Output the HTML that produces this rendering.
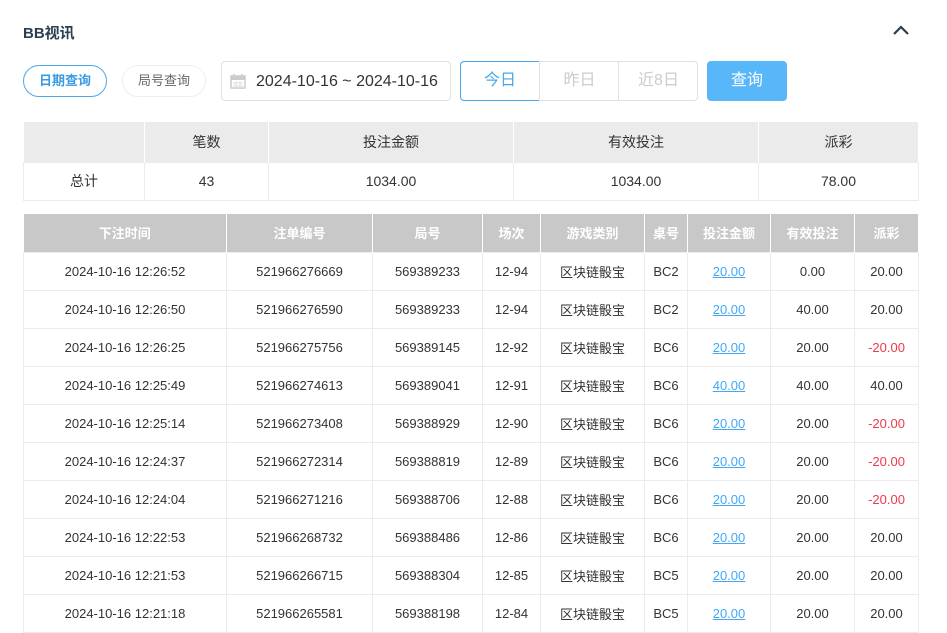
<!DOCTYPE html><html><head><meta charset="utf-8"><style>
*{box-sizing:border-box;margin:0;padding:0}
body{width:947px;height:624px;overflow:hidden;background:#fff;font-family:"Liberation Sans","Noto Sans CJK SC",sans-serif;color:#333;position:relative;font-size:14px}
.a{position:absolute}
.title{left:23px;top:22px;font-size:15px;font-weight:bold;color:#2c3e50}
.btn{border-radius:16px;text-align:center;font-size:13px;line-height:30px;height:32px}
table{border-collapse:collapse;position:absolute;left:23px;width:895px;table-layout:fixed}
td,th{text-align:center;font-weight:normal}
.s th{background:#ebebeb;height:40px;border-right:1px solid #fff;font-size:14px}
.s td{height:38px;border:1px solid #ebebeb;font-size:14px}
.d th{background:#c8c8c8;color:#fff;font-weight:bold;font-size:13px;height:38px;border-right:1px solid #fff}
.d td{height:38px;border:1px solid #ebebeb;font-size:13px}
.l{color:#3fa9f5;text-decoration:underline}
.r{color:#f0394b}
</style></head><body>
<div class="a title">BB视讯</div>
<svg class="a" style="left:892px;top:24px" width="18" height="12"><path d="M2 10 L9 3 L16 10" stroke="#2c3e50" stroke-width="2.2" fill="none"/></svg>
<div class="a btn" style="left:23px;top:65px;width:84px;border:1px solid #4aa8e8;color:#3a9be0;font-weight:bold">日期查询</div>
<div class="a btn" style="left:122px;top:65px;width:84px;border:1px solid #eee;color:#666">局号查询</div>
<div class="a" style="left:221px;top:61px;width:230px;height:40px;border:1px solid #e0e0e0;border-radius:4px"></div>
<svg class="a" style="left:230px;top:73px" width="16" height="16"><rect x="1" y="3" width="14" height="12" fill="none" stroke="#ccc" stroke-width="1.5"/><rect x="1" y="3" width="14" height="4" fill="#ccc"/><path d="M4 1v4M12 1v4" stroke="#ccc" stroke-width="1.5"/><path d="M3 10h10M3 13h10M6 8v7M10 8v7" stroke="#ddd"/></svg>
<div class="a" style="left:256px;top:73px;font-size:16px;color:#333">2024-10-16 ~ 2024-10-16</div>
<div class="a" style="left:460px;top:61px;width:238px;height:40px;border:1px solid #e0e0e0;border-radius:4px"></div>
<div class="a" style="left:460px;top:61px;width:80px;height:40px;border:1px solid #4aa8e8;border-radius:4px 0 0 4px;color:#4aa8e8;text-align:center;line-height:38px;font-size:16px">今日</div>
<div class="a" style="left:539px;top:61px;width:1px;height:40px;background:#e0e0e0"></div>
<div class="a" style="left:540px;top:61px;width:79px;line-height:40px;text-align:center;color:#ccc;font-size:16px">昨日</div>
<div class="a" style="left:618px;top:61px;width:1px;height:40px;background:#e0e0e0"></div>
<div class="a" style="left:619px;top:61px;width:79px;line-height:40px;text-align:center;color:#ccc;font-size:16px">近8日</div>
<div class="a" style="left:707px;top:61px;width:80px;height:40px;background:#58b7f9;border-radius:4px;color:#fff;text-align:center;line-height:40px;font-size:16px">查询</div>
<table class="s" style="top:122px"><colgroup><col width="121"><col width="124"><col width="245"><col width="245"><col width="160"></colgroup>
<tr><th></th><th>笔数</th><th>投注金额</th><th>有效投注</th><th>派彩</th></tr>
<tr><td>总计</td><td>43</td><td>1034.00</td><td>1034.00</td><td>78.00</td></tr></table>
<table class="d" style="top:214px"><colgroup><col width="203"><col width="146"><col width="110"><col width="58"><col width="104"><col width="43"><col width="83"><col width="84"><col width="64"></colgroup>
<tr><th>下注时间</th><th>注单编号</th><th>局号</th><th>场次</th><th>游戏类别</th><th>桌号</th><th>投注金额</th><th>有效投注</th><th>派彩</th></tr>
<tr><td>2024-10-16 12:26:52</td><td>521966276669</td><td>569389233</td><td>12-94</td><td>区块链骰宝</td><td>BC2</td><td class="l">20.00</td><td>0.00</td><td>20.00</td></tr>
<tr><td>2024-10-16 12:26:50</td><td>521966276590</td><td>569389233</td><td>12-94</td><td>区块链骰宝</td><td>BC2</td><td class="l">20.00</td><td>40.00</td><td>20.00</td></tr>
<tr><td>2024-10-16 12:26:25</td><td>521966275756</td><td>569389145</td><td>12-92</td><td>区块链骰宝</td><td>BC6</td><td class="l">20.00</td><td>20.00</td><td class="r">-20.00</td></tr>
<tr><td>2024-10-16 12:25:49</td><td>521966274613</td><td>569389041</td><td>12-91</td><td>区块链骰宝</td><td>BC6</td><td class="l">40.00</td><td>40.00</td><td>40.00</td></tr>
<tr><td>2024-10-16 12:25:14</td><td>521966273408</td><td>569388929</td><td>12-90</td><td>区块链骰宝</td><td>BC6</td><td class="l">20.00</td><td>20.00</td><td class="r">-20.00</td></tr>
<tr><td>2024-10-16 12:24:37</td><td>521966272314</td><td>569388819</td><td>12-89</td><td>区块链骰宝</td><td>BC6</td><td class="l">20.00</td><td>20.00</td><td class="r">-20.00</td></tr>
<tr><td>2024-10-16 12:24:04</td><td>521966271216</td><td>569388706</td><td>12-88</td><td>区块链骰宝</td><td>BC6</td><td class="l">20.00</td><td>20.00</td><td class="r">-20.00</td></tr>
<tr><td>2024-10-16 12:22:53</td><td>521966268732</td><td>569388486</td><td>12-86</td><td>区块链骰宝</td><td>BC6</td><td class="l">20.00</td><td>20.00</td><td>20.00</td></tr>
<tr><td>2024-10-16 12:21:53</td><td>521966266715</td><td>569388304</td><td>12-85</td><td>区块链骰宝</td><td>BC5</td><td class="l">20.00</td><td>20.00</td><td>20.00</td></tr>
<tr><td>2024-10-16 12:21:18</td><td>521966265581</td><td>569388198</td><td>12-84</td><td>区块链骰宝</td><td>BC5</td><td class="l">20.00</td><td>20.00</td><td>20.00</td></tr>
</table>
</body></html>
